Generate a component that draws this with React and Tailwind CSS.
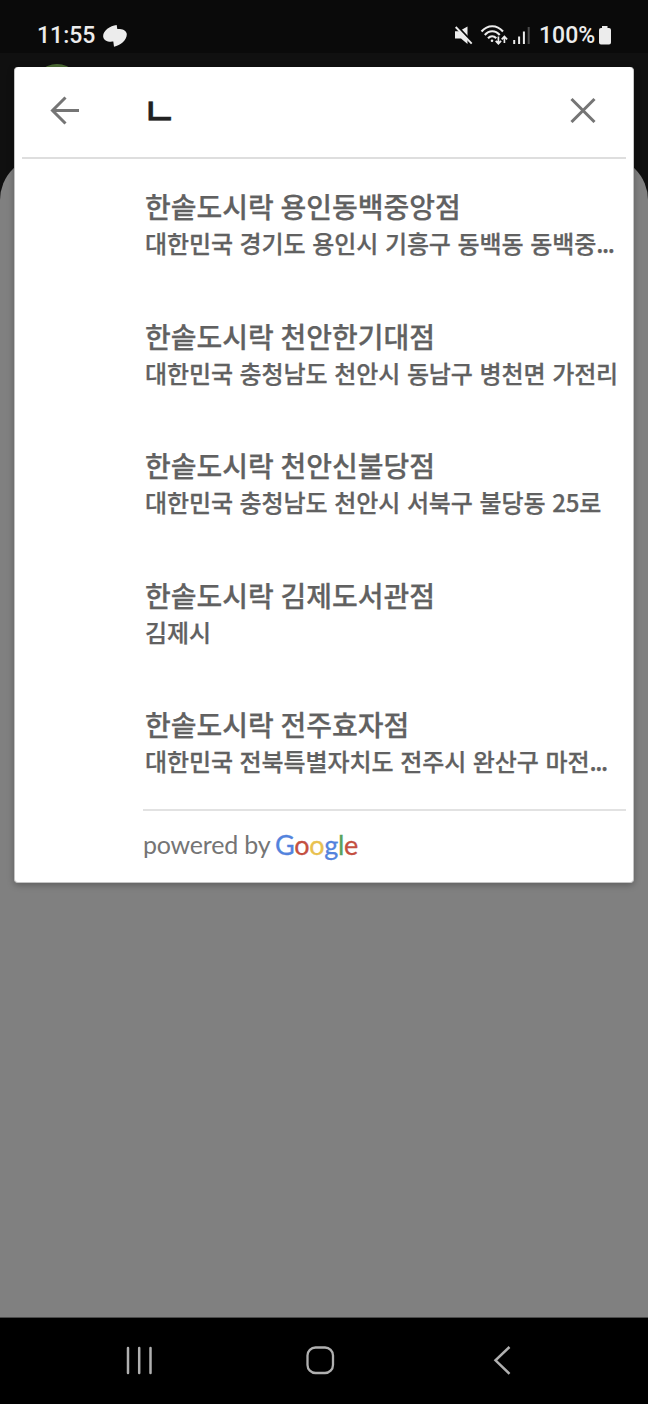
const places = [
  ['한솥도시락 용인동백중앙점', '대한민국 경기도 용인시 기흥구 동백동 동백중', '...'],
  ['한솥도시락 천안한기대점', '대한민국 충청남도 천안시 동남구 병천면 가전리', ''],
  ['한솥도시락 천안신불당점', '대한민국 충청남도 천안시 서북구 불당동 25로', ''],
  ['한솥도시락 김제도서관점', '김제시', ''],
  ['한솥도시락 전주효자점', '대한민국 전북특별자치도 전주시 완산구 마전', '...'],
];

function StatusBar() {
  return (
    <header className="flex h-[53px] shrink-0 items-start bg-[#0a0a0a] pl-[37px] pr-[36px] pt-[20px] font-['Roboto',sans-serif] text-[23px] font-medium leading-[32px] text-[#ececec]">
      <span className="w-[66px]">11:55</span>
      <svg className="mt-[4px] h-[23px] w-[24px]" viewBox="0 0 24 23" fill="#ececec">
        <path d="M13.700.9 14.300 5C19 4.800 23 6 23.700 9.500 24.600 15.500 18 21.500 11 22.700L10.300 17.600C5 18.200.8 17 .2 12.800-.5 7 6.500 1.800 13.700.9Z" />
      </svg>
      <span className="flex-1" />
      <svg className="mt-[5px] h-[21px] w-[78px]" viewBox="454 25 78 21" fill="none" stroke="#ececec">
        <path d="M455 31.300h4l8.500-4.800v17.500l-6.500-5.500h-6Z" fill="#ececec" stroke="none" />
        <path d="M457.500 26.500l16 17" stroke="#0a0a0a" strokeWidth="2.200" />
        <path d="M455.700 27l16 16.700" strokeWidth="1.900" />
        <path d="M481.500 31.500c6.200-7 15.300-7 21.500 0M484.800 35c4.300-5 10.600-5 14.900 0M488 38.300c2.500-2.800 5.800-2.800 8.300 0" strokeWidth="2.100" />
        <circle cx="492" cy="40.700" r="1.300" fill="#ececec" stroke="none" />
        <path d="M498.400 36.500v7M495.700 40.800l2.700 2.900 2.700-2.900M504.400 43v-6.500M501.700 39.300l2.700-2.900 2.700 2.900" strokeWidth="1.700" />
        <path d="M514.200 40v4M519.100 36.500V44M523.900 31.500V44" strokeWidth="2" />
        <path d="M528.700 27v17" stroke="#4b4b4b" strokeWidth="2" />
      </svg>
      <span className="ml-[7px] w-[59px] whitespace-nowrap">100%</span>
      <svg className="mt-[5px] h-[20px] w-[14px]" viewBox="0 0 14 20" fill="#ececec">
        <path d="M4 1h5.500v2H11a2 2 0 0 1 2 2v12.500a2 2 0 0 1-2 2H3a2 2 0 0 1-2-2V5a2 2 0 0 1 2-2h1Z" />
      </svg>
    </header>
  );
}

function SearchDialog() {
  return (
    <section className="absolute left-[14px] top-[67px] flex h-[816px] w-[620px] flex-col rounded-[4px] border-x border-b border-[#c4c4c4] bg-white px-[7px] shadow-[0_2px_7px_rgba(0,0,0,0.28)]">
      <div className="flex h-[92px] shrink-0 items-center border-b-2 border-[#dedede] pb-[4px]">
        <svg className="ml-[28px] h-[30px] w-[30px]" viewBox="0 0 30 30" fill="none" stroke="#757575" strokeWidth="3">
          <path d="M29 15.500H3M15.500 2.500 2.500 15.500l13 13" />
        </svg>
        <span className="-mt-[2px] ml-[62px] flex-1 font-['Noto_Sans_CJK_KR',sans-serif] text-[38px] font-medium leading-[40px] text-[#212121] [-webkit-text-stroke:0.400px]">ㄴ</span>
        <svg className="mr-[30px] h-[26px] w-[26px]" viewBox="0 0 26 26" fill="none" stroke="#757575" strokeWidth="3">
          <path d="m1.500 2 23 23m0-23-23 23" />
        </svg>
      </div>
      <ul className="h-[650px] pl-[123px] pt-[28px] font-['Noto_Sans_CJK_KR',sans-serif] font-medium text-[#616161] [-webkit-text-stroke:0.250px]">
        {places.map(([name, address, more]) => (
          <li key={name} className="h-[129.600px] whitespace-nowrap">
            <p className="text-[28px] leading-[38px] [word-spacing:0.300px]">{name}</p>
            <p className="text-[24px] leading-[36px] tracking-[-0.100px] [word-spacing:1.400px]">
              {address}
              <span className="tracking-[-1.400px]">{more}</span>
            </p>
          </li>
        ))}
      </ul>
      <div className="ml-[121px] flex h-[73px] items-center border-t-2 border-[#e2e2e2] pb-[3px] font-['Lato',sans-serif] text-[25px] text-[#757575]">
        <span className="w-[132px] whitespace-nowrap tracking-[-0.200px]">powered by</span>
        <span className="text-[27px] tracking-[-0.300px] [-webkit-text-stroke:0.300px]">
          <span className="text-[#5383dd]">G</span>
          <span className="text-[#c4503f]">o</span>
          <span className="text-[#e9c14f]">o</span>
          <span className="text-[#5383dd]">g</span>
          <span className="text-[#57a35c]">l</span>
          <span className="text-[#c4503f]">e</span>
        </span>
      </div>
    </section>
  );
}

export default function App() {
  return (
    <main className="relative flex h-[1404px] w-[648px] flex-col overflow-hidden bg-[#101010]">
      <StatusBar />
      <div className="flex h-[103px] shrink-0 items-start pl-[32px] pt-[11px]">
        <div className="h-[50px] w-[50px] rounded-full bg-[#4c6b34]" />
      </div>
      <div className="flex-1 rounded-t-[44px] bg-[#808080]" />
      <SearchDialog />
      <nav className="flex h-[87px] shrink-0 items-start border-t border-[#4a4a4a] bg-black pl-[124px] pt-[27px]">
        <svg className="h-[32px] w-[30px]" viewBox="0 0 30 32" stroke="#b0b0b0" strokeWidth="2.500" strokeLinecap="round">
          <path d="M4 3v25M15.200 3v25M26.500 3v25" />
        </svg>
        <svg className="ml-[150px] h-[32px] w-[32px]" viewBox="0 0 32 32" fill="none" stroke="#b0b0b0" strokeWidth="2.300">
          <rect x="3.500" y="2.500" width="25.500" height="25.500" rx="8" />
        </svg>
        <svg className="ml-[156px] h-[32px] w-[22px]" viewBox="0 0 22 32" fill="none" stroke="#b0b0b0" strokeWidth="2.500">
          <path d="M17.500 2 3.500 15.300l14 13.500" />
        </svg>
      </nav>
    </main>
  );
}
